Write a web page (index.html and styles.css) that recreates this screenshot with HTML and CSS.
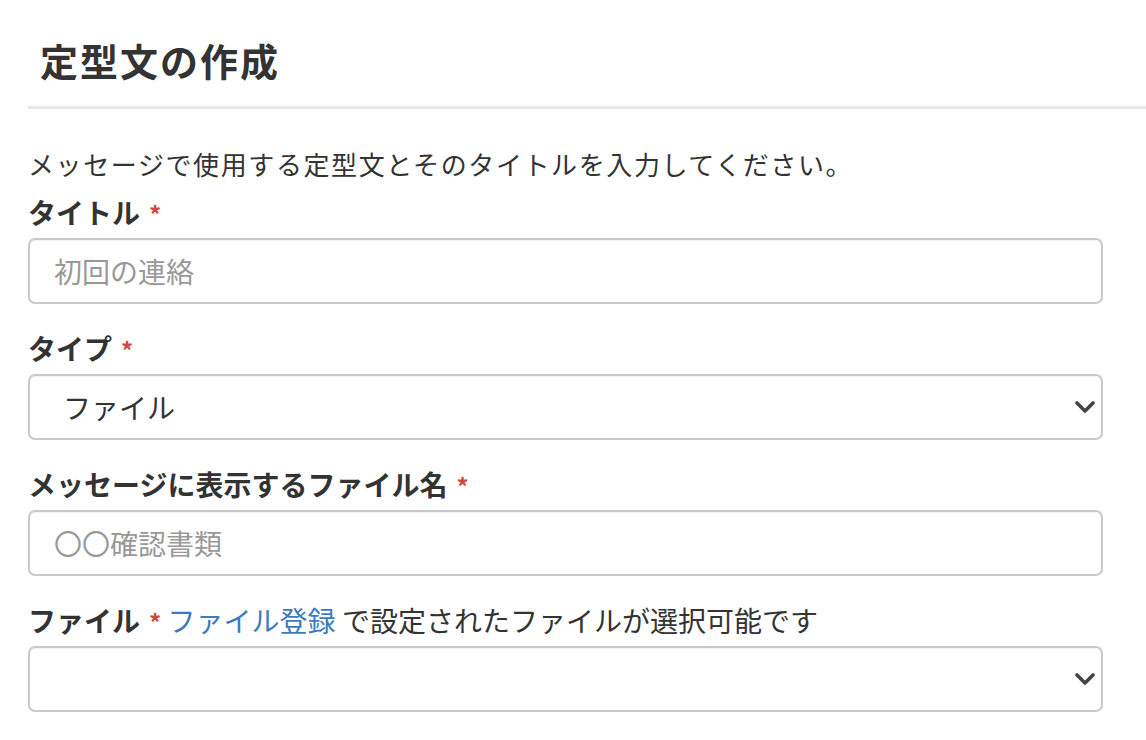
FILE: index.html
```html
<!DOCTYPE html>
<html lang="ja">
<head>
    <meta charset="UTF-8">
    <title>定型文の作成</title>
    <link rel="stylesheet" href="styles.css">
</head>
<body>
    <div class="page-header">
        <h1>定型文の作成</h1>
    </div>

    <form class="template-form">
        <p class="form-lead">メッセージで使用する定型文とそのタイトルを入力してください。</p>

        <div class="form-group">
            <label class="form-label" for="title">タイトル<span class="required">*</span></label>
            <input type="text" id="title" class="form-control" placeholder="初回の連絡">
        </div>

        <div class="form-group">
            <label class="form-label" for="type">タイプ<span class="required">*</span></label>
            <div class="select-wrap">
                <select id="type" class="form-control form-select">
                    <option>ファイル</option>
                    <option>テキスト</option>
                </select>
                <svg class="select-arrow" width="20" height="12" viewBox="0 0 20 12"><path d="M2 2 L10 10 L18 2" fill="none" stroke="#444" stroke-width="3.6" stroke-linecap="round" stroke-linejoin="round"/></svg>
            </div>
        </div>

        <div class="form-group">
            <label class="form-label" for="filename">メッセージに表示するファイル名<span class="required">*</span></label>
            <input type="text" id="filename" class="form-control" placeholder="〇〇確認書類">
        </div>

        <div class="form-group">
            <label class="form-label" for="file">ファイル<span class="required">*</span> <a href="#" class="link">ファイル登録</a> <span class="hint">で設定されたファイルが選択可能です</span></label>
            <div class="select-wrap">
                <select id="file" class="form-control form-select">
                    <option></option>
                </select>
                <svg class="select-arrow" width="20" height="12" viewBox="0 0 20 12"><path d="M2 2 L10 10 L18 2" fill="none" stroke="#444" stroke-width="3.6" stroke-linecap="round" stroke-linejoin="round"/></svg>
            </div>
        </div>
    </form>
</body>
</html>
```

FILE: styles.css
```css
body {
    margin: 0;
    font-family: "Noto Sans CJK JP", sans-serif;
    color: #333;
    background-color: #fff;
}

.page-header {
    margin-left: 28px;
    border-bottom: 3px solid #e6e7eb;
}

.page-header h1 {
    margin: 0;
    padding: 35px 0 21px 12px;
    font-size: 38px;
    line-height: 50px;
    letter-spacing: 2px;
    font-weight: bold;
    color: #333;
}

.template-form {
    padding: 38px 43px 0 28px;
}

.form-lead {
    margin: 0 0 14px;
    font-size: 26px;
    line-height: 34px;
    letter-spacing: 1.6px;
}

.form-group {
    margin-bottom: 27px;
}

.form-label {
    display: block;
    height: 34px;
    margin-bottom: 9px;
    font-size: 28px;
    line-height: 34px;
    font-weight: bold;
    white-space: nowrap;
}

.required {
    color: #cf4b40;
    margin-left: 9px;
    font-size: 24px;
    line-height: 1;
}

.link {
    color: #3d7bc0;
    font-weight: normal;
    text-decoration: none;
}

.hint {
    font-weight: normal;
}

.form-control {
    display: block;
    box-sizing: border-box;
    width: 100%;
    height: 66px;
    padding: 0 24px;
    border: 2px solid #cacaca;
    border-radius: 7px;
    box-shadow: inset 0 1px 2px rgba(0,0,0,0.06);
    font-family: inherit;
    font-size: 28px;
    color: #333;
    background-color: #fff;
}

.form-control::placeholder {
    color: #999;
}

.select-wrap {
    position: relative;
}

.form-select {
    appearance: none;
    -webkit-appearance: none;
    padding-left: 33px;
}

.select-arrow {
    position: absolute;
    right: 8px;
    top: 27px;
    pointer-events: none;
}
```
